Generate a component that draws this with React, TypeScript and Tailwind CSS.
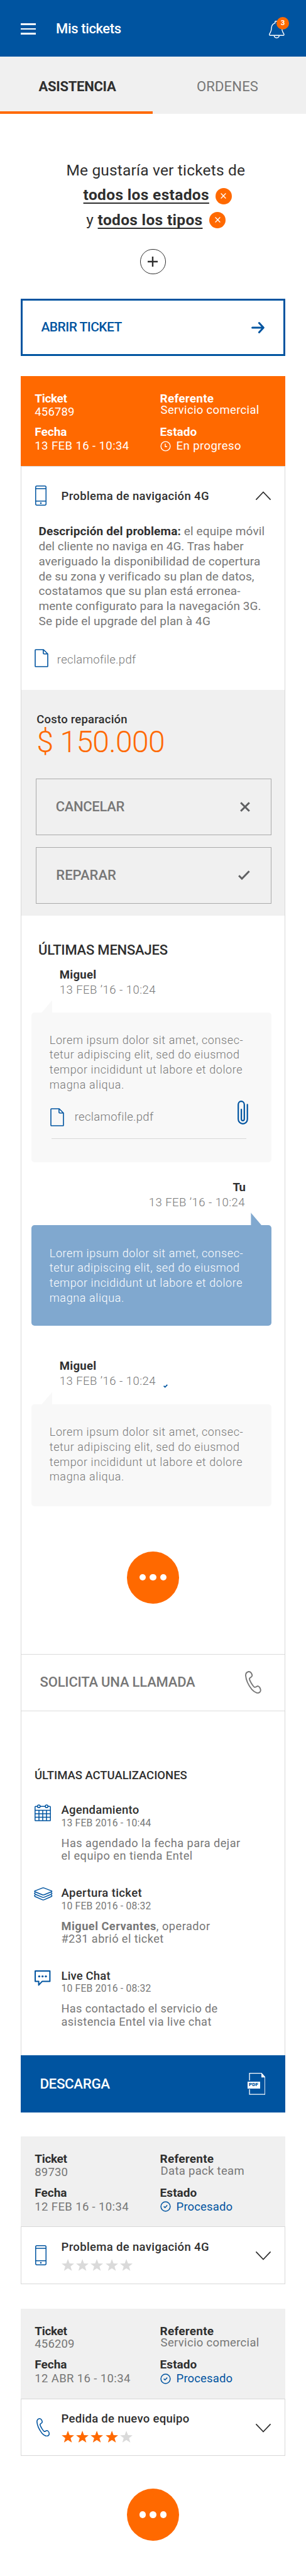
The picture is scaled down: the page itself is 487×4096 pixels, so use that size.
import type { ReactNode } from "react";

const BLUE = "#0054a0";

function PhoneIcon() {
  return (
    <svg width="18" height="32" viewBox="0 0 18 32" fill="none" stroke={BLUE} strokeWidth="1.5" className="shrink-0">
      <rect x="0.75" y="0.75" width="16.5" height="30.5" rx="2" />
      <path d="M1 5H17M1 24.8H17" />
      <circle cx="9" cy="28" r="1.3" fill={BLUE} stroke="none" />
    </svg>
  );
}

function HandsetIcon({ className }: { className: string }) {
  return (
    <svg viewBox="0 0 25.6 35.8" fill="none" stroke="currentColor" strokeWidth="1.9" strokeLinejoin="round" className={className}>
      <path d="M1 7.2C0.9 3.6 3.2 1.6 5.6 1C8.8 0.6 11.2 4.4 11.3 7.6C11.3 9.4 7.6 10.4 7 11.9C6.6 14.6 12.8 24.6 15.4 25.9C17.2 26.1 19 23.6 20.8 24.1C23.4 24.9 24.9 28.6 24.7 31.4C24 33.8 21.6 35.1 18.8 34.8C15.4 33.6 13 31.9 10.4 28.8C6.4 23.6 1.6 15 1 7.2Z" />
    </svg>
  );
}

function FileIcon() {
  return (
    <svg width="22" height="29" viewBox="0 0 22 29" fill="none" stroke={BLUE} strokeWidth="1.6" strokeLinejoin="round" className="shrink-0">
      <path d="M1.8 1H14.2L21 7.8V27.2Q21 28 20.2 28H1.8Q1 28 1 27.2V1.8Q1 1 1.8 1Z" />
      <path d="M13.9 1V6.6Q13.9 7.8 15 7.8H21" />
    </svg>
  );
}

function Chevron({ up = false }: { up?: boolean }) {
  return (
    <svg width="24" height="14" viewBox="0 0 24 14" fill="none" stroke="#2f2f2f" strokeWidth="1.7" strokeLinecap="round" className={up ? "rotate-180" : ""}>
      <path d="M0.9 0.9L12 12.6L23.1 0.9" />
    </svg>
  );
}

function RemoveBadge({ className }: { className: string }) {
  return (
    <span className={`flex size-[26px] items-center justify-center rounded-full bg-[#ff6900] ${className}`}>
      <svg width="9" height="9" viewBox="0 0 9 9" stroke="#fff" strokeWidth="1.4" fill="none">
        <path d="M0.6 0.6L8.4 8.4M8.4 0.6L0.6 8.4" />
      </svg>
    </span>
  );
}

function MoreButton() {
  return (
    <div className="mx-auto flex size-[83px] items-center justify-center gap-[5.8px] rounded-full bg-[#ff6900]">
      <span className="size-[10.8px] rounded-full bg-white" />
      <span className="size-[10.8px] rounded-full bg-white" />
      <span className="size-[10.8px] rounded-full bg-white" />
    </div>
  );
}

function Stars({ value }: { value: number }) {
  return (
    <div className="mt-[9.4px] flex gap-[3.2px]">
      {[0, 1, 2, 3, 4].map((i) => (
        <svg key={i} width="20.2" height="19" viewBox="0 0 20 19" fill={i < value ? "#ff6900" : "#dadada"}>
          <path d="M10 0L12.6 6.9L20 7.2L14.2 11.8L16.3 18.8L10 14.8L3.7 18.8L5.8 11.8L0 7.2L7.4 6.9Z" />
        </svg>
      ))}
    </div>
  );
}

type Ticket = {
  className: string;
  label: string;
  id: string;
  date: ReactNode;
  referente: ReactNode;
  estado: ReactNode;
};

function TicketHeader({ className, label, id, date, referente, estado }: Ticket) {
  return (
    <div className={`flex h-[143px] pt-[26px] pl-[22.3px] text-[18.5px] leading-5 ${className}`}>
      <div className="w-[199.3px]">
        <div className={`text-[19px] font-bold tracking-[-0.34px] ${label}`}>Ticket</div>
        <div className="mt-[0.6px] tracking-[0.16px]">{id}</div>
        <div className={`mt-[12.9px] text-[19px] font-bold ${label}`}>Fecha</div>
        <div className="mt-[2px]">{date}</div>
      </div>
      <div>
        <div className={`text-[19px] font-bold tracking-[0.23px] ${label}`}>Referente</div>
        <div className="-mt-[1.7px] pl-px">{referente}</div>
        <div className={`mt-[15.2px] text-[19px] font-bold tracking-[0.05px] ${label}`}>Estado</div>
        <div className="mt-[2px] flex items-center gap-[9px]">{estado}</div>
      </div>
    </div>
  );
}

function Processed() {
  return (
    <>
      <svg width="17" height="17" viewBox="0 0 17 17" fill="none" stroke={BLUE} strokeWidth="1.5">
        <circle cx="8.5" cy="8.5" r="7.4" />
        <path d="M5.6 8.4L7.7 10.3L11.2 6.6" />
      </svg>
      <span className="tracking-[0.13px] text-[#0054a0]">Procesado</span>
    </>
  );
}

function ClosedTicket({ icon, title, stars }: { icon: ReactNode; title: ReactNode; stars: number }) {
  return (
    <div className="flex h-[91.2px] border border-[#d8d8d8] pr-[22.5px] pl-[21.5px]">
      <div className="w-[42px] pt-[29px]">{icon}</div>
      <div className="flex-1 pt-[21.4px]">
        <div className="text-[18.5px] leading-5 font-medium text-[#2f2f2f]">{title}</div>
        <Stars value={stars} />
      </div>
      <div className="pt-[39px]">
        <Chevron />
      </div>
    </div>
  );
}

function Lorem() {
  return (
    <div className="text-[18px] leading-[23.85px] font-light whitespace-nowrap">
      <div className="tracking-[0.61px]">Lorem ipsum dolor sit amet, consec-</div>
      <div className="tracking-[0.55px]">tetur adipiscing elit, sed do eiusmod</div>
      <div className="tracking-[0.6px]">tempor incididunt ut labore et dolore</div>
      <div className="tracking-[0.61px]">magna aliqua.</div>
    </div>
  );
}

function Meta({ name, nameClass, children }: { name: string; nameClass: string; children?: ReactNode }) {
  return (
    <>
      <div className={`text-[18.5px] leading-5 font-bold text-[#2f2f2f] ${nameClass}`}>{name}</div>
      <div className="mt-1 flex text-[18.5px] leading-5 font-light text-[#777]">
        <span className="tracking-[0.46px]">13 FEB ’16 - 10:24</span>
        {children}
      </div>
    </>
  );
}

function Bubble({ own = false, className, children }: { own?: boolean; className: string; children: ReactNode }) {
  return (
    <div className={`relative mt-[26px] mr-[20.6px] ml-[16px] rounded-[5px] pl-[28.8px] ${className}`}>
      <svg
        width="17.4"
        height="20.5"
        viewBox="0 0 17.4 20.5"
        fill="currentColor"
        className={`absolute -top-5 ${own ? "right-[16.4px] -scale-x-100" : "left-[15.8px]"}`}
      >
        <path d="M0 20.5L17.4 0V20.5Z" />
      </svg>
      {children}
    </div>
  );
}

function Update({ icon, title, date, children }: { icon: ReactNode; title: ReactNode; date: ReactNode; children: ReactNode }) {
  return (
    <div className="flex">
      <div className="w-[43.5px] pt-px">{icon}</div>
      <div className="text-[#777]">
        <div className="text-[18.5px] leading-5 font-medium text-[#2f2f2f]">{title}</div>
        <div className="mt-[1.6px] text-[15.7px] leading-[18px] tracking-[0.2px]">{date}</div>
        <div className="mt-[13.2px] text-[18.2px] leading-[20.2px]">{children}</div>
      </div>
    </div>
  );
}

export default function App() {
  return (
    <div className="h-[4096px] w-[487px] overflow-hidden bg-white font-[Roboto,sans-serif] text-[#2f2f2f]">
      <header className="flex h-[90px] items-start bg-[#0054a0] pl-[32.6px] text-white">
        <div className="mt-[37px] flex w-[24px] flex-col gap-[5px]">
          <span className="h-[2.6px] bg-white" />
          <span className="h-[2.6px] bg-white" />
          <span className="h-[2.6px] bg-white" />
        </div>
        <div className="mt-[34px] ml-[32.5px] text-[22px] leading-6 font-medium tracking-[-0.38px]">Mis tickets</div>
        <div className="relative mt-[32.6px] mr-[34px] ml-auto h-7 w-[25px]">
          <svg width="25" height="28" viewBox="0 0 25 28" fill="none" stroke="#fff" strokeWidth="1.4" strokeLinejoin="round">
            <path d="M14.8 3.6V1.6Q14.8 0.7 13.9 0.7H10.7Q9.8 0.7 9.8 1.6V3.6C6 4.8 4.3 7.4 4.1 11C4 14.4 3.8 16 2.4 18.4C1.2 20.4 0.7 21 0.7 22Q0.7 23.2 2 23.2H22.8Q24 23.2 24 22C24 21 23.4 20.4 22.2 18.4C20.8 16 20.6 14.4 20.5 11C20.3 7.4 18.6 4.8 14.8 3.6Z" />
            <path d="M8.2 23.4C8.6 25.8 10.2 27.2 12.3 27.2S16 25.8 16.4 23.4" />
          </svg>
          <span className="absolute -top-[5.6px] left-[12.2px] flex size-[19.6px] items-center justify-center rounded-full bg-[#ff6900] text-[11.5px] leading-none font-bold">
            3
          </span>
        </div>
      </header>

      <nav className="flex h-[91px] bg-[#f0f0f0] text-center text-[22px] leading-6">
        <div className="w-[243px] border-b-4 border-[#ff6900] pt-[36.4px] pl-[3px] font-bold tracking-[-0.28px]">ASISTENCIA</div>
        <div className="flex-1 pt-[36.4px] pr-[6px] tracking-[0.19px] text-[#777]">ORDENES</div>
      </nav>

      <section className="pt-[69.7px] text-[24.5px] leading-[39.5px] whitespace-nowrap">
        <div className="pl-[105.4px] tracking-[0.18px]">Me gustaría ver tickets de</div>
        <div className="flex h-[39.5px] items-center pl-[132.6px]">
          <span className="font-bold tracking-[0.34px] underline decoration-[1.5px] underline-offset-[4px] [text-decoration-skip-ink:none]">todos los estados</span>
          <RemoveBadge className="mt-[4px] ml-[10px]" />
        </div>
        <div className="flex h-[39.5px] items-center pl-[137.3px]">
          <span className="w-[18.3px]">y</span>
          <span className="font-bold tracking-[0.32px] underline decoration-[1.5px] underline-offset-[4px] [text-decoration-skip-ink:none]">todos los tipos</span>
          <RemoveBadge className="mt-[1px] ml-[10.6px]" />
        </div>
        <div className="mx-auto mt-[26.9px] flex size-[40.3px] items-center justify-center rounded-full border-[1.5px] border-[#2f2f2f]">
          <svg width="16" height="16" viewBox="0 0 16 16" stroke="#2f2f2f" strokeWidth="2.4">
            <path d="M0 8H16M8 0V16" />
          </svg>
        </div>
      </section>

      <main className="mx-[33px]">
        <div className="mt-[39px] flex h-[91px] items-center justify-between border-[3px] border-[#0054a0] pr-[30px] pl-[29.5px] text-[#0054a0]">
          <span className="text-[21px] font-medium tracking-[-0.55px]">ABRIR TICKET</span>
          <svg width="21" height="18" viewBox="0 0 21 18" fill="none" stroke={BLUE} strokeWidth="3" strokeLinecap="round" strokeLinejoin="round">
            <path d="M1.6 9H19M12.4 1.6L19.3 9L12.4 16.4" />
          </svg>
        </div>

        <article className="mt-[31.6px]">
          <TicketHeader
            className="bg-[#ff6900] text-white"
            label="text-white"
            id="456789"
            date={<span className="tracking-[0.41px]">13 FEB 16 - 10:34</span>}
            referente={<span className="tracking-[0.33px]">Servicio comercial</span>}
            estado={
              <>
                <svg width="17" height="17" viewBox="0 0 17 17" fill="none" stroke="#fff" strokeWidth="1.4">
                  <circle cx="8.5" cy="8.5" r="7.4" />
                  <path d="M8 4.6V9.2H11" />
                </svg>
                <span className="tracking-[0.41px]">En progreso</span>
              </>
            }
          />

          <div className="border-x border-t border-[#d8d8d8]">
            <div className="flex h-[34px] items-center pr-[22.5px] pl-[21.8px] mt-[29.5px]">
              <PhoneIcon />
              <span className="mt-[2px] ml-[23.7px] text-[18.5px] leading-5 font-medium tracking-[0.35px]">Problema de navigación 4G</span>
              <span className="ml-auto">
                <Chevron up />
              </span>
            </div>

            <div className="mt-[27.7px] pl-[27.5px] text-[19px] leading-[23.8px] whitespace-nowrap text-[#777]">
              <div>
                <span className="font-bold tracking-[0.15px] text-[#2f2f2f]">Descripción del problema:</span>
                <span className="tracking-[0.12px]"> el equipe móvil</span>
              </div>
              <div className="tracking-[0.03px]">del cliente no naviga en 4G. Tras haber</div>
              <div className="tracking-[0.13px]">averiguado la disponibilidad de copertura</div>
              <div className="tracking-[0.06px]">de su zona y verificado su plan de datos,</div>
              <div className="tracking-[0.07px]">costatamos que su plan está erronea-</div>
              <div className="tracking-[0.06px]">mente configurato para la navegación 3G.</div>
              <div className="tracking-[0.12px]">Se pide el upgrade del plan à 4G</div>
            </div>

            <div className="mt-[32.7px] flex h-[29px] pl-[21px]">
              <FileIcon />
              <span className="mt-[6.6px] ml-[13.8px] text-[18.5px] leading-5 font-light tracking-[0.3px] text-[#777]">reclamofile.pdf</span>
            </div>

            <div className="mt-[36px] h-[358.5px] bg-[#f0f0f0] pr-[21.5px] pl-[22.5px] pt-[36.6px]">
              <div className="pl-[1.8px] text-[18.5px] leading-5 font-medium tracking-[0.21px]">Costo reparación</div>
              <div className="mt-[0.8px] pl-[2px] text-[48px] leading-[50px] font-light tracking-[-0.69px] text-[#ff6900]">$ 150.000</div>
              <div className="mt-[33px] flex h-[90px] items-center justify-between border border-[#aaa] pr-[32.6px] pl-[31.2px] text-[22px] leading-6 font-medium tracking-[-0.33px] text-[#777]">
                CANCELAR
                <svg width="16" height="16" viewBox="0 0 16 16" stroke="#5f6062" strokeWidth="3">
                  <path d="M1.2 1.2L14.8 14.8M14.8 1.2L1.2 14.8" />
                </svg>
              </div>
              <div className="mt-[19px] flex h-[90px] items-center justify-between border border-[#aaa] pr-[33px] pl-[31.8px] text-[22px] leading-6 font-medium text-[#777]">
                REPARAR
                <svg width="19" height="16" viewBox="0 0 19 16" fill="none" stroke="#5f6062" strokeWidth="3">
                  <path d="M1.2 8.2L6 13.2L17.6 1.2" />
                </svg>
              </div>
            </div>

            <div className="mt-[43.3px] pl-[27px] text-[22px] leading-6 font-medium tracking-[-0.21px]">ÚLTIMAS MENSAJES</div>

            <div className="mt-[16.3px] pl-[60.8px]">
              <Meta name="Miguel" nameClass="tracking-[0.3px]" />
            </div>
            <Bubble className="h-[238px] bg-[#f8f8f8] pt-[32px] text-[#f8f8f8]">
              <div className="text-[#777]">
                <Lorem />
                <div className="mt-[13.5px] flex">
                  <div className="mt-[11.4px] flex pl-[1.6px]">
                    <FileIcon />
                    <span className="mt-[4px] ml-[16.3px] text-[18.5px] leading-5 font-light tracking-[0.3px]">reclamofile.pdf</span>
                  </div>
                  <svg width="17" height="38" viewBox="0 0 17 38" fill="none" stroke={BLUE} strokeWidth="2.2" strokeLinecap="round" className="mr-[37.2px] ml-auto">
                    <path d="M15.7 6.3V29.4C15.7 33.8 12.6 36.8 8.6 36.8S1.2 33.8 1.2 29.4V6.6C1.2 3.4 3.2 1.2 5.9 1.2S10.8 3.4 10.8 6.6V29C10.8 31 9.8 32 8.4 32S6.1 31 6.1 29V14" />
                  </svg>
                </div>
                <div className="mt-[19.6px] mr-[40px] ml-[3.6px] h-px bg-[#d8d8d8]" />
              </div>
            </Bubble>

            <div className="mt-[30.5px] flex flex-col items-end pr-[63px]">
              <Meta name="Tu" nameClass="tracking-[-0.8px]" />
            </div>
            <Bubble own className="h-[160.3px] bg-[#80a8cf] pt-[32.5px] text-[#80a8cf]">
              <div className="text-white">
                <Lorem />
              </div>
            </Bubble>

            <div className="mt-[53.6px] pl-[60.8px]">
              <Meta name="Miguel" nameClass="tracking-[0.3px]">
                <svg width="7" height="6" viewBox="0 0 7 6" fill="none" stroke={BLUE} strokeWidth="1.7" className="mt-[15px] ml-[12px]">
                  <path d="M0.6 2.6L2.7 4.6L6.3 0.8" />
                </svg>
              </Meta>
            </div>
            <Bubble className="mb-[71.2px] h-[162.5px] bg-[#f8f8f8] pt-[32px] text-[#f8f8f8]">
              <div className="text-[#777]">
                <Lorem />
              </div>
            </Bubble>

            <MoreButton />

            <div className="mt-[80px] flex h-[91px] items-center justify-between border-y border-[#dcdcdc] pr-[37.5px] pl-[29.6px] text-[#777]">
              <span className="text-[22px] leading-6 font-medium tracking-[-0.2px]">SOLICITA UNA LLAMADA</span>
              <HandsetIcon className="h-[35.8px] w-[25.6px]" />
            </div>

            <div className="mt-[92px] pl-[21px] text-[18.5px] leading-5 font-medium tracking-[-0.04px]">ÚLTIMAS ACTUALIZACIONES</div>

            <div className="mt-[35.7px] flex flex-col gap-[38.5px] pb-[43.4px] pl-[20px]">
              <Update
                title={<span className="tracking-[0.27px]">Agendamiento</span>}
                date="13 FEB 2016 - 10:44"
                icon={
                  <svg width="26" height="27" viewBox="0 0 26 27" fill="none" stroke={BLUE} strokeWidth="1.5" className="ml-[1.2px]">
                    <path d="M4.6 3.2H1.8Q0.8 3.2 0.8 4.2V25.4Q0.8 26 1.4 26H24.6Q25.2 26 25.2 25.4V4.2Q25.2 3.2 24.2 3.2H21.4M9 3.2H17" />
                    <circle cx="6.8" cy="3.2" r="2.1" />
                    <circle cx="19.2" cy="3.2" r="2.1" />
                    <path d="M0.8 9.6H25.2M0.8 15H25.2M0.8 20.5H25.2M7 9.6V26M13 9.6V26M19 9.6V26" />
                  </svg>
                }
              >
                <div className="tracking-[0.44px]">Has agendado la fecha para dejar</div>
                <div className="tracking-[0.47px]">el equipo en tienda Entel</div>
              </Update>
              <Update
                title={<span className="tracking-[0.39px]">Apertura ticket</span>}
                date="10 FEB 2016 - 08:32"
                icon={
                  <svg width="30" height="21" viewBox="0 0 30 21" fill="none" stroke={BLUE} strokeWidth="1.5" strokeLinejoin="round">
                    <path d="M13.2 1.1Q14.8 0.5 16.4 1.1L28 5.6Q29.2 6.3 28 7L16.4 11.7Q14.8 12.4 13.2 11.7L1.6 7Q0.4 6.3 1.6 5.6Z" />
                    <path d="M2.2 8.4Q0 9.6 1.6 10.7L13.2 15.6Q14.8 16.3 16.4 15.6L28 10.7Q29.6 9.6 27.4 8.4" />
                    <path d="M2.2 12.2Q0 13.4 1.6 14.5L13.2 19.6Q14.8 20.3 16.4 19.6L28 14.5Q29.6 13.4 27.4 12.2" />
                  </svg>
                }
              >
                <div className="tracking-[0.5px]">
                  <b className="font-bold">Miguel Cervantes</b>, operador
                </div>
                <div className="tracking-[0.4px]">#231 abrió el ticket</div>
              </Update>
              <Update
                title={<span className="tracking-[0.17px]">Live Chat</span>}
                date="10 FEB 2016 - 08:32"
                icon={
                  <svg width="26" height="25" viewBox="0 0 26 25" fill="none" stroke={BLUE} strokeWidth="2" strokeLinejoin="round" className="ml-[1.2px]">
                    <path d="M1 1H24.4V17.6H12L6.6 23.4V17.6H1Z" />
                    <g fill={BLUE} stroke="none">
                      <circle cx="7.4" cy="9.6" r="1.7" />
                      <circle cx="12.7" cy="9.6" r="1.7" />
                      <circle cx="18" cy="9.6" r="1.7" />
                    </g>
                  </svg>
                }
              >
                <div className="tracking-[0.35px]">Has contactado el servicio de</div>
                <div className="tracking-[0.42px]">asistencia Entel via live chat</div>
              </Update>
            </div>
          </div>

          <div className="flex h-[91px] items-center justify-between bg-[#0054a0] pr-[32px] pl-[30.4px] text-white">
            <span className="-mt-[2px] text-[22.4px] leading-6 font-medium tracking-[-0.39px]">DESCARGA</span>
            <div className="relative h-[35px] w-[28.5px]">
              <svg width="28.5" height="35" viewBox="0 0 28.5 35" fill="none" stroke="#fff" strokeWidth="1.3">
                <path d="M3.1 12V0.7H22L27.8 7V34.2H3.1V26" />
                <path d="M22 0V7.3H28.5Z" fill="#fff" stroke="none" />
              </svg>
              <span className="absolute top-[13.6px] left-0 flex h-[11px] w-5 items-center justify-center bg-white text-[8px] leading-none font-black text-[#0054a0]">
                PDF
              </span>
            </div>
          </div>
        </article>

        <article className="mt-[38.2px]">
          <TicketHeader
            className="bg-[#f0f0f0] text-[#777]"
            label="text-[#2f2f2f]"
            id="89730"
            date={<span className="tracking-[0.37px]">12 FEB 16 - 10:34</span>}
            referente={<span className="tracking-[0.3px]">Data pack team</span>}
            estado={<Processed />}
          />
          <ClosedTicket icon={<PhoneIcon />} title={<span className="tracking-[0.35px]">Problema de navigación 4G</span>} stars={0} />
        </article>

        <article className="mt-[39.1px] mb-[52px]">
          <TicketHeader
            className="bg-[#f0f0f0] text-[#777]"
            label="text-[#2f2f2f]"
            id="456209"
            date={<span className="tracking-[0.37px]">12 ABR 16 - 10:34</span>}
            referente={<span className="tracking-[0.33px]">Servicio comercial</span>}
            estado={<Processed />}
          />
          <ClosedTicket
            icon={<HandsetIcon className="mt-[1px] ml-[2px] h-[29.4px] w-[21px] text-[#0054a0]" />}
            title={<span className="tracking-[0.3px]">Pedida de nuevo equipo</span>}
            stars={4}
          />
        </article>

        <MoreButton />
      </main>
    </div>
  );
}
